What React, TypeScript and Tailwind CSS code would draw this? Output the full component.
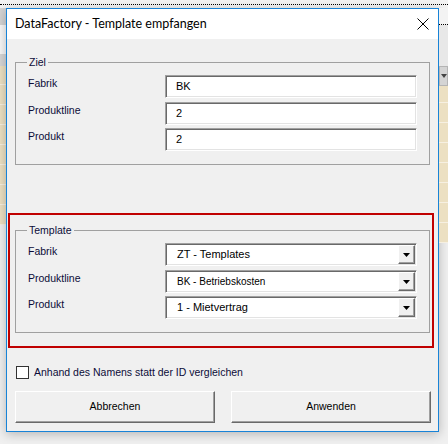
const uiFont = { fontFamily: '"Liberation Sans", Arial, sans-serif' }

function Cells({ count, startOffset = 0 }: { count: number; startOffset?: number }) {
  return (
    <div className="flex flex-col bg-[#ece0c2]">
      {startOffset > 0 && <div style={{ height: startOffset }} className="border-b border-[#f6f0e2]" />}
      {Array.from({ length: count }).map((_, i) => (
        <div key={i} className="h-[20px] border-b border-[#f6f0e2]" />
      ))}
    </div>
  )
}

function LeftStrip() {
  return (
    <div className="w-[6px] shrink-0 flex flex-col">
      <div className="h-[17px] bg-[#d3d3d3]" />
      <div className="h-[29px] bg-[#f7f7f7]" />
      <div className="h-[12px] bg-[#d6d6d6]" />
      <Cells count={7} startOffset={19} />
    </div>
  )
}

function RightStrip() {
  return (
    <div className="flex-1 flex flex-col">
      <div className="h-[17px] border-b border-dotted border-black bg-[#f3f3f3]" />
      <div className="h-[41px] bg-[#e8e8e8]" />
      <div className="h-[20px] bg-[#d4d4d4] border border-[#b4b4b4] flex items-center">
        <svg width="6" height="4" viewBox="0 0 6 4" className="ml-[1px]">
          <path d="M0 0h6L3 4z" fill="#444" />
        </svg>
      </div>
      <Cells count={7} startOffset={17} />
    </div>
  )
}

const sunken =
  'w-[252px] h-[23px] bg-white border border-t-[#a0a0a0] border-l-[#a0a0a0] border-r-white border-b-white shadow-[inset_1px_1px_0_#696969,inset_-1px_-1px_0_#e3e3e3]'

function TextBox({ value }: { value: string }) {
  return <div className={`${sunken} flex items-center pl-[10px] text-[11px] text-black`}>{value}</div>
}

function ComboBox({ value, small }: { value: string; small?: boolean }) {
  return (
    <div className={`${sunken} flex items-stretch p-[1px]`}>
      <div className={`flex-1 flex items-center pl-[10px] text-black ${small ? 'text-[10px]' : 'text-[11px]'}`}>{value}</div>
      <div className="w-[17px] bg-[#f0f0f0] border border-t-white border-l-white border-r-[#696969] border-b-[#696969] shadow-[inset_-1px_-1px_0_#a0a0a0] flex items-center justify-center">
        <svg width="7" height="4" viewBox="0 0 7 4">
          <path d="M0 0h7L3.5 4z" fill="#000" />
        </svg>
      </div>
    </div>
  )
}

function Row({ label, children, className = '' }: { label: string; children: React.ReactNode; className?: string }) {
  return (
    <div className={`flex items-start pl-[12px] ${className}`}>
      <div className="w-[137px] pt-[2px] text-[10.5px] leading-[13px] text-[#0c0c38]">{label}</div>
      {children}
    </div>
  )
}

function Group({ title, children, className = '' }: { title: string; children: React.ReactNode; className?: string }) {
  return (
    <fieldset className={`w-[415px] h-[110px] border border-[#a0a0a0] px-0 ${className}`}>
      <legend className="ml-[11px] px-[2px] text-[10.5px] leading-[14px] text-[#0c0c38]">{title}</legend>
      <div className="pt-[6px] flex flex-col">{children}</div>
    </fieldset>
  )
}

function Button({ label }: { label: string }) {
  return (
    <button className="w-[200px] h-[32px] bg-[#f0f0f0] border border-t-white border-l-white border-r-[#696969] border-b-[#696969] shadow-[inset_-1px_-1px_0_#a0a0a0] text-[10.5px] text-black">
      {label}
    </button>
  )
}

function Dialog() {
  return (
    <div className="w-[433px] h-[424px] shrink-0 border border-[#1883d7] flex flex-col shadow-[0_2px_10px_rgba(0,0,0,0.25)]">
      <div className="h-[30px] bg-white flex items-center justify-between pl-[8px] pr-[9px]">
        <span className="text-[12.5px] text-black" style={{ fontFamily: 'Lato, "Noto Sans", sans-serif' }}>
          DataFactory - Template empfangen
        </span>
        <svg width="12" height="12" viewBox="0 0 12 12">
          <path d="M0.5 0.5L11.5 11.5M11.5 0.5L0.5 11.5" stroke="#000" strokeWidth="1" />
        </svg>
      </div>
      <div className="flex-1 bg-[#f0f0f0] flex flex-col" style={uiFont}>
        <Group title="Ziel" className="ml-[8px] mt-[16px]">
          <Row label="Fabrik">
            <TextBox value="BK" />
          </Row>
          <Row label="Produktline" className="mt-[4px]">
            <TextBox value="2" />
          </Row>
          <Row label="Produkt" className="mt-[3px]">
            <TextBox value="2" />
          </Row>
        </Group>

        <div className="ml-[1px] mt-[48px] w-[426px] h-[135px] border-2 border-[#c00000] flex flex-col">
          <Group title="Template" className="ml-[5px] mt-[8px]">
            <Row label="Fabrik">
              <ComboBox value="ZT - Templates" />
            </Row>
            <Row label="Produktline" className="mt-[4px]">
              <ComboBox value="BK - Betriebskosten" small />
            </Row>
            <Row label="Produkt" className="mt-[3px]">
              <ComboBox value="1 - Mietvertrag" />
            </Row>
          </Group>
        </div>

        <label className="ml-[9px] mt-[18px] flex items-center gap-[5px] text-[10.5px] leading-[13px] text-[#0c0c38]">
          <span className="w-[13px] h-[13px] bg-white border border-[#333]" />
          Anhand des Namens statt der ID vergleichen
        </label>

        <div className="ml-[8px] mt-[12px] flex gap-[16px]">
          <Button label="Abbrechen" />
          <Button label="Anwenden" />
        </div>
      </div>
    </div>
  )
}

export default function App() {
  return (
    <div className="w-[448px] h-[444px] overflow-hidden bg-[#f0f0f0] flex flex-col" style={uiFont}>
      <div className="h-[8px] shrink-0 bg-[#f3f3f3]">
        <div className="h-[5px] border-b border-dotted border-black" />
      </div>
      <div className="flex">
        <LeftStrip />
        <Dialog />
        <RightStrip />
      </div>
    </div>
  )
}
